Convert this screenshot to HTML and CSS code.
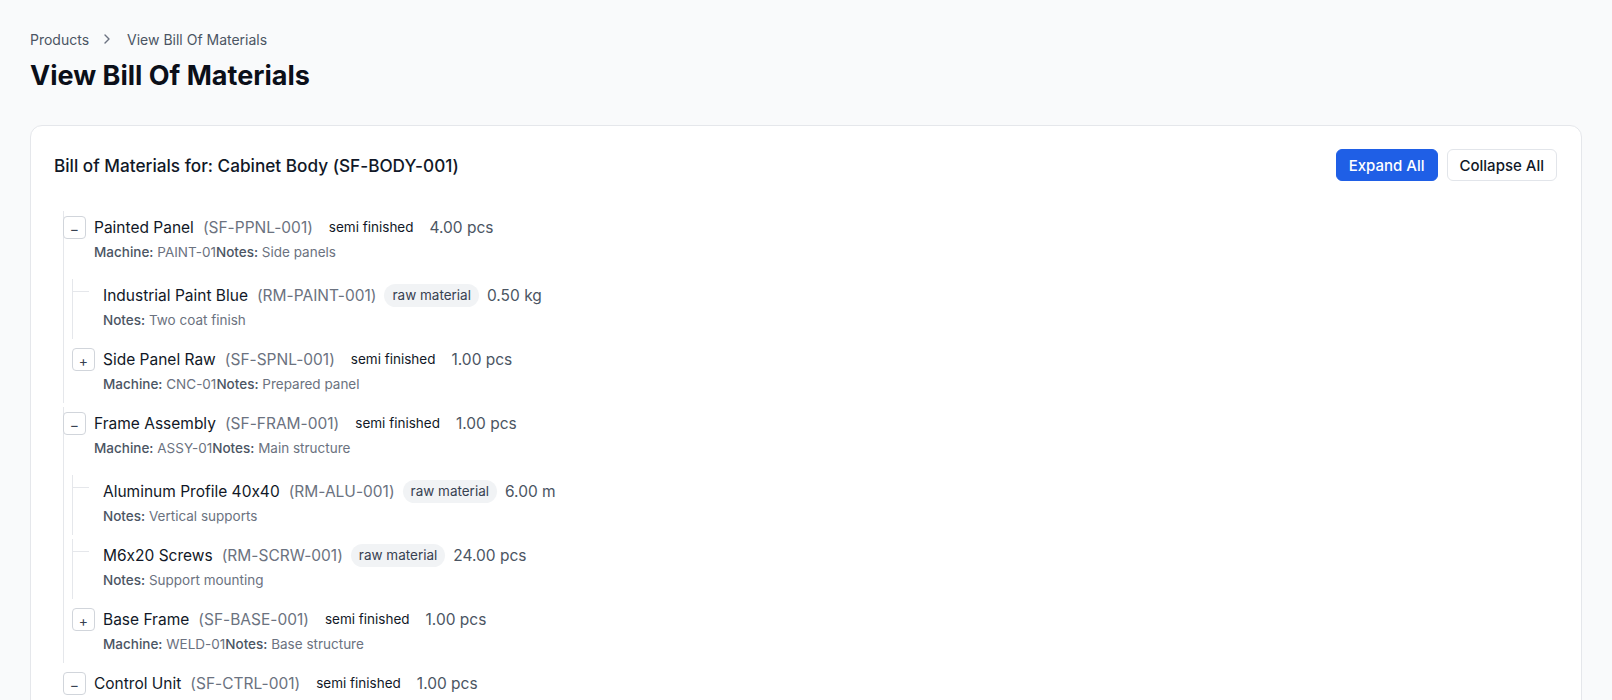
FILE: index.html
```html
<!DOCTYPE html>
<html lang="en">
<head>
<meta charset="utf-8">
<title>View Bill Of Materials</title>
<link rel="stylesheet" href="styles.css">
</head>
<body>
<main class="page">
  <nav class="crumbs">
    <span class="crumb">Products</span>
    <svg class="chev" viewBox="0 0 16 16" width="16" height="16"><path d="M6 4l4 4-4 4" fill="none" stroke="currentColor" stroke-width="1.4" stroke-linecap="round" stroke-linejoin="round"/></svg>
    <span class="crumb">View Bill Of Materials</span>
  </nav>
  <h1 class="title">View Bill Of Materials</h1>

  <section class="card">
    <header class="card-head">
      <h2 class="card-title">Bill of Materials for: Cabinet Body (SF-BODY-001)</h2>
      <div class="actions">
        <button class="btn btn-primary">Expand All</button>
        <button class="btn btn-outline">Collapse All</button>
      </div>
    </header>

    <ul class="tree">
      <li class="item lined">
        <div class="node">
          <div class="row">
            <span class="toggle">&minus;</span>
            <span class="name">Painted Panel</span>
            <span class="code">(SF-PPNL-001)</span>
            <span class="badge">semi finished</span>
            <span class="qty">4.00 pcs</span>
          </div>
          <div class="meta"><span class="lbl">Machine:</span> PAINT-01<span class="lbl">Notes:</span> Side panels</div>
        </div>
        <ul class="children">
          <li class="item lined leaf">
            <div class="node">
              <div class="row">
                <span class="spacer"></span>
                <span class="name">Industrial Paint Blue</span>
                <span class="code">(RM-PAINT-001)</span>
                <span class="badge badge-raw">raw material</span>
                <span class="qty">0.50 kg</span>
              </div>
              <div class="meta"><span class="lbl">Notes:</span> Two coat finish</div>
            </div>
          </li>
          <li class="item">
            <div class="node">
              <div class="row">
                <span class="toggle">+</span>
                <span class="name">Side Panel Raw</span>
                <span class="code">(SF-SPNL-001)</span>
                <span class="badge">semi finished</span>
                <span class="qty">1.00 pcs</span>
              </div>
              <div class="meta"><span class="lbl">Machine:</span> CNC-01<span class="lbl">Notes:</span> Prepared panel</div>
            </div>
          </li>
        </ul>
      </li>

      <li class="item lined">
        <div class="node">
          <div class="row">
            <span class="toggle">&minus;</span>
            <span class="name">Frame Assembly</span>
            <span class="code">(SF-FRAM-001)</span>
            <span class="badge">semi finished</span>
            <span class="qty">1.00 pcs</span>
          </div>
          <div class="meta"><span class="lbl">Machine:</span> ASSY-01<span class="lbl">Notes:</span> Main structure</div>
        </div>
        <ul class="children">
          <li class="item lined leaf">
            <div class="node">
              <div class="row">
                <span class="spacer"></span>
                <span class="name">Aluminum Profile 40x40</span>
                <span class="code">(RM-ALU-001)</span>
                <span class="badge badge-raw">raw material</span>
                <span class="qty">6.00 m</span>
              </div>
              <div class="meta"><span class="lbl">Notes:</span> Vertical supports</div>
            </div>
          </li>
          <li class="item lined leaf">
            <div class="node">
              <div class="row">
                <span class="spacer"></span>
                <span class="name">M6x20 Screws</span>
                <span class="code">(RM-SCRW-001)</span>
                <span class="badge badge-raw">raw material</span>
                <span class="qty">24.00 pcs</span>
              </div>
              <div class="meta"><span class="lbl">Notes:</span> Support mounting</div>
            </div>
          </li>
          <li class="item">
            <div class="node">
              <div class="row">
                <span class="toggle">+</span>
                <span class="name">Base Frame</span>
                <span class="code">(SF-BASE-001)</span>
                <span class="badge">semi finished</span>
                <span class="qty">1.00 pcs</span>
              </div>
              <div class="meta"><span class="lbl">Machine:</span> WELD-01<span class="lbl">Notes:</span> Base structure</div>
            </div>
          </li>
        </ul>
      </li>

      <li class="item">
        <div class="node">
          <div class="row">
            <span class="toggle">&minus;</span>
            <span class="name">Control Unit</span>
            <span class="code">(SF-CTRL-001)</span>
            <span class="badge">semi finished</span>
            <span class="qty">1.00 pcs</span>
          </div>
          <div class="meta"><span class="lbl">Machine:</span> ASSY-02<span class="lbl">Notes:</span> Electronics housing</div>
        </div>
      </li>
    </ul>
  </section>
</main>
</body>
</html>
```
FILE: styles.css
```css
* { box-sizing: border-box; }
html, body { margin: 0; padding: 0; }
body {
  background: #f9fafb;
  font-family: Inter, "Noto Sans", "Liberation Sans", sans-serif;
  font-feature-settings: "calt" 0;
  color: #111827;
  -webkit-font-smoothing: antialiased;
}
.page { padding: 30px 30px 0 30px; }

.crumbs {
  display: flex;
  align-items: center;
  gap: 10px;
  height: 18px;
  font-size: 14px;
  color: #4b5563;
}
.chev { color: #6b7280; width: 16px; height: 16px; margin-right: 2px; }

.title {
  margin: 10px 0 0 0;
  height: 36px;
  line-height: 36px;
  font-size: 27px;
  font-weight: 700;
  color: #0b0f19;
}

.card {
  margin-top: 31px;
  background: #fff;
  border: 1px solid #e5e7eb;
  border-radius: 12px;
  padding: 23px 24px 40px 23px;
  min-height: 600px;
}

.card-head {
  display: flex;
  align-items: center;
  justify-content: space-between;
  height: 32px;
}
.card-title {
  margin: 0;
  font-size: 17.2px;
  font-weight: 500;
  color: #111827;
}
.actions { display: flex; gap: 9px; }
.btn {
  height: 32px;
  padding: 0 12px;
  border-radius: 6px;
  font-family: inherit;
  font-feature-settings: "calt" 0;
  font-size: 15px;
  font-weight: 500;
  cursor: pointer;
}
.btn-primary { background: #1f5fe6; color: #fff; border: 1px solid #1f5fe6; }
.btn-outline { background: #fff; color: #111827; border: 1px solid #e2e5ea; }

.tree, .children { list-style: none; margin: 0; padding: 0; }
.tree { margin: 26px 0 0 9px; }
.children { margin: 4px 0 0 9px; }

.item { position: relative; }
.item.lined::before {
  content: "";
  position: absolute;
  left: 0;
  top: 4px;
  bottom: 0;
  border-left: 1px solid #e5e7eb;
}
.item.leaf::after {
  content: "";
  position: absolute;
  left: 0;
  top: 16px;
  width: 17px;
  border-top: 1px solid #e5e7eb;
}

.node { padding: 8px 0 9px 0; }
.row {
  display: flex;
  align-items: center;
  height: 24px;
  gap: 8px;
  font-size: 15.5px;
}
.toggle, .spacer {
  flex: 0 0 23px;
  width: 23px;
  height: 23px;
}
.toggle {
  position: relative;
  z-index: 1;
  display: flex;
  align-items: center;
  justify-content: center;
  background: #fff;
  border: 1px solid #d1d5db;
  border-radius: 4px;
  font-size: 14px;
  line-height: 1;
  padding-top: 3px;
  color: #374151;
}
.name { color: #111827; }
.code { color: #6b7280; margin-left: 1px; }
.badge {
  display: inline-flex;
  align-items: center;
  height: 23px;
  padding: 0 8px;
  border-radius: 12px;
  font-size: 13.5px;
  color: #111827;
}
.badge-raw { background: #f1f3f5; color: #374151; }
.qty { color: #4b5563; }

.meta {
  margin-top: 4px;
  padding-left: 31px;
  height: 19px;
  line-height: 19px;
  font-size: 13.5px;
  color: #6b7280;
}
.lbl { font-weight: 500; color: #4b5563; }
```
